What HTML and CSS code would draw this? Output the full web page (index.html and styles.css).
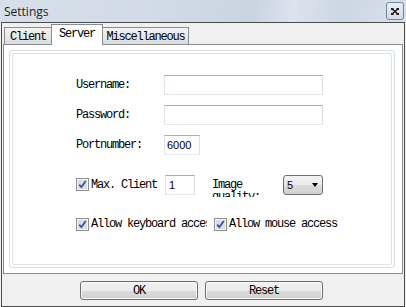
FILE: index.html
```html
<!DOCTYPE html>
<html lang="en">
<head>
  <meta charset="UTF-8" />
  <title>Settings</title>
  <link rel="stylesheet" href="styles.css">
</head>
<body>

  <div class="window">
    <div class="titlebar">
      <span class="title">Settings</span>
      <span class="close">
        <svg width="8" height="7" viewBox="0 0 8 7">
          <path d="M1 0.8 L7 6.2 M7 0.8 L1 6.2" stroke="#1c1c1c" stroke-width="1.5" fill="none"/>
          <rect x="0" y="0" width="2.5" height="2" fill="#1c1c1c"/>
          <rect x="5.5" y="0" width="2.5" height="2" fill="#1c1c1c"/>
          <rect x="0" y="5" width="2.5" height="2" fill="#1c1c1c"/>
          <rect x="5.5" y="5" width="2.5" height="2" fill="#1c1c1c"/>
        </svg>
      </span>
    </div>

    <div class="frame">
      <div class="tabs">
        <div class="tab tab-client">Client</div>
        <div class="tab tab-server active">Server</div>
        <div class="tab tab-misc">Miscellaneous</div>
      </div>

      <div class="panel">
        <div class="group">
          <div class="group-inner">

            <div class="field-row">
              <span class="label">Username:</span>
              <span class="input wide"></span>
            </div>
            <div class="field-row">
              <span class="label">Password:</span>
              <span class="input wide"></span>
            </div>
            <div class="field-row">
              <span class="label">Portnumber:</span>
              <span class="input port">6000</span>
            </div>

            <div class="max-row">
              <span class="check">
                <svg width="13" height="13" viewBox="0 0 13 13">
                  <rect x="0.5" y="0.5" width="12" height="12" fill="#f5f5f5" stroke="#8e8f8f"/>
                  <rect x="2" y="2" width="9" height="9" fill="#d9dee6"/>
                  <path d="M3.2 6.6 L5.4 9 L9.8 3" stroke="#3d5795" stroke-width="1.8" fill="none"/>
                </svg>
              </span>
              <span class="check-text max-text">Max. Client</span>
              <span class="input small">1</span>
              <span class="quality">Image quality:</span>
              <span class="combo">
                <span class="combo-value">5</span>
                <span class="arrow"></span>
              </span>
            </div>

            <div class="allow-row">
              <span class="check">
                <svg width="13" height="13" viewBox="0 0 13 13">
                  <rect x="0.5" y="0.5" width="12" height="12" fill="#f5f5f5" stroke="#8e8f8f"/>
                  <rect x="2" y="2" width="9" height="9" fill="#d9dee6"/>
                  <path d="M3.2 6.6 L5.4 9 L9.8 3" stroke="#3d5795" stroke-width="1.8" fill="none"/>
                </svg>
              </span>
              <span class="check-text keyboard-text">Allow keyboard access</span>
              <span class="check second">
                <svg width="13" height="13" viewBox="0 0 13 13">
                  <rect x="0.5" y="0.5" width="12" height="12" fill="#f5f5f5" stroke="#8e8f8f"/>
                  <rect x="2" y="2" width="9" height="9" fill="#d9dee6"/>
                  <path d="M3.2 6.6 L5.4 9 L9.8 3" stroke="#3d5795" stroke-width="1.8" fill="none"/>
                </svg>
              </span>
              <span class="check-text">Allow mouse access</span>
            </div>

          </div>
        </div>
      </div>

      <div class="buttons">
        <button class="btn">OK</button>
        <button class="btn">Reset</button>
      </div>
    </div>
  </div>

</body>
</html>
```

FILE: styles.css
```css
* {
  box-sizing: border-box;
}

body {
  margin: 0;
  background: #f0f0f0;
  font-family: 'Liberation Mono', monospace;
  font-size: 12px;
  letter-spacing: -1.2px;
  color: #000;
}

.window {
  width: 406px;
  height: 307px;
  overflow: hidden;
}

.titlebar {
  height: 22px;
  display: flex;
  align-items: center;
  justify-content: space-between;
  padding-left: 4px;
  background: linear-gradient(100deg, #d6dfea 0%, #d1dbe7 40%, #c9d4e2 62%, #dbe3ed 72%, #ccd7e4 84%, #d8e0ea 100%);
}

.title {
  font-family: 'Open Sans', sans-serif;
  font-size: 12px;
  letter-spacing: 0;
  color: #1e1e1e;
}

.close {
  width: 18px;
  height: 18px;
  margin-right: 2px;
  display: flex;
  align-items: center;
  justify-content: center;
  border: 1px solid #76869a;
  border-radius: 3px;
  background: linear-gradient(#e9eef4, #d3dce7);
}

.frame {
  width: 404px;
  height: 285px;
  margin-left: 1px;
  border: 1px solid #4c4c4c;
  background: #f0f0f0;
}

.tabs {
  display: flex;
  height: 21px;
  padding-top: 1px;
  padding-left: 2px;
}

.tab {
  height: 17px;
  margin-top: 3px;
  padding-top: 2px;
  line-height: 14px;
  text-align: center;
  border: 1px solid #898c95;
  border-bottom: none;
  background: linear-gradient(#f3f3f3, #e9e9e9 50%, #dcdcdc);
}

.tab-client {
  width: 48px;
}

.tab-server {
  width: 52px;
  margin-left: -1px;
}

.tab-misc {
  width: 87px;
  margin-left: -1px;
}

.tab.active {
  position: relative;
  z-index: 1;
  height: 21px;
  margin-top: 0;
  margin-bottom: -1px;
  padding-top: 2px;
  background: #fff;
}

.panel {
  height: 230px;
  margin: 0 1px;
  padding: 5px 7px 5px 5px;
  border: 1px solid #898c95;
  background: #fff;
}

.group {
  height: 100%;
  padding: 2px;
  border: 1px solid #d5dfe5;
  border-radius: 3px;
}

.group-inner {
  height: 100%;
  padding: 21px 0 0 63px;
  border: 1px solid #dce4e9;
  border-radius: 2px;
}

.field-row {
  display: flex;
  align-items: center;
  height: 20px;
  margin-bottom: 10px;
}

.label {
  width: 88px;
}

.input {
  height: 20px;
  padding-left: 2px;
  line-height: 18px;
  font-family: 'Liberation Sans', sans-serif;
  font-size: 11px;
  letter-spacing: 0;
  border: 1px solid;
  border-color: #abadb3 #dbdfe6 #e3e9ef #e2e3ea;
  background: #fff;
}

.wide {
  width: 159px;
}

.port {
  width: 36px;
}

.small {
  width: 30px;
  padding-left: 3px;
}

.max-row {
  display: flex;
  align-items: flex-start;
  height: 22px;
  margin-top: 20px;
}

.check {
  width: 13px;
  height: 13px;
  display: flex;
}

.max-row .check {
  margin-top: 3px;
}

.check-text {
  margin-left: 2px;
  line-height: 20px;
  white-space: nowrap;
}

.max-text {
  width: 74px;
}

.quality {
  width: 71px;
  height: 22px;
  margin-left: 17px;
  padding-top: 4px;
  line-height: 12px;
  overflow: hidden;
}

.combo {
  width: 40px;
  height: 20px;
  display: flex;
  align-items: center;
  justify-content: space-between;
  padding: 0 4px 0 3px;
  border: 1px solid #707070;
  border-radius: 3px;
  background: linear-gradient(#f2f2f2, #ebebeb 50%, #dddddd 50%, #cfcfcf);
  font-family: 'Liberation Sans', sans-serif;
  font-size: 11px;
  letter-spacing: 0;
}

.arrow {
  width: 0;
  height: 0;
  border-top: 4px solid #000;
  border-left: 3.5px solid transparent;
  border-right: 3.5px solid transparent;
}

.allow-row {
  display: flex;
  align-items: center;
  height: 20px;
  margin-top: 17px;
}

.keyboard-text {
  width: 116px;
  overflow: hidden;
}

.check.second {
  margin-left: 7px;
}

.buttons {
  display: flex;
  gap: 7px;
  padding: 7px 0 0 78px;
}

.btn {
  width: 118px;
  height: 19px;
  padding: 0;
  font-family: 'Liberation Mono', monospace;
  font-size: 12px;
  letter-spacing: -1.2px;
  color: #000;
  border: 1px solid #707070;
  border-radius: 3px;
  background: linear-gradient(#f2f2f2, #ebebeb 50%, #dddddd 50%, #cfcfcf);
  box-shadow: inset 0 0 0 1px #f8f8f8;
}
```
